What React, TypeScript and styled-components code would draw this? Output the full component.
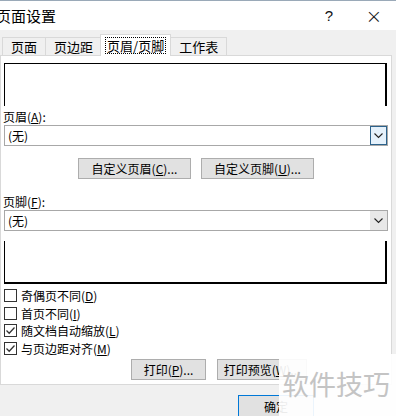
import React, { ReactElement } from "react";
import styled, { createGlobalStyle } from "styled-components";

const GlobalStyle = createGlobalStyle`
	html, body {
		margin: 0;
		padding: 0;
		background: #f0f0f0;
		overflow: hidden;
	}
	body {
		font-family: "Noto Sans CJK SC", "Liberation Sans", sans-serif;
		font-size: 12px;
		color: #000;
	}
`;

const tabs = ["页面", "页边距", "页眉/页脚", "工作表"];

const checks = [
	{ label: "奇偶页不同", key: "D", checked: false },
	{ label: "首页不同", key: "I", checked: false },
	{ label: "随文档自动缩放", key: "L", checked: true },
	{ label: "与页边距对齐", key: "M", checked: true },
];

function ChevronDown(): ReactElement {
	return (
		<svg width="9" height="6" viewBox="0 0 9 6">
			<path d="M0.5 0.5 L4.5 4.5 L8.5 0.5" fill="none" stroke="#222" strokeWidth="1.1" />
		</svg>
	);
}

function Check(): ReactElement {
	return (
		<svg width="11" height="11" viewBox="0 0 11 11">
			<path d="M1.5 5.5 L4.2 8.2 L9.5 2.5" fill="none" stroke="#333" strokeWidth="1.3" />
		</svg>
	);
}

export default function App(): ReactElement {
	return (
		<Dialog>
			<GlobalStyle />
			<TitleBar>
				<Title>页面设置</Title>
				<TitleBtn>?</TitleBtn>
				<TitleBtn $close>×</TitleBtn>
			</TitleBar>
			<Body>
				<TabStrip>
					{tabs.map((t) => (
						<Tab key={t} $active={t === "页眉/页脚"}>
							<TabText $active={t === "页眉/页脚"}>{t}</TabText>
						</Tab>
					))}
				</TabStrip>
				<Panel>
					<Preview $top />
					<Label>
						页眉(<u>A</u>):
					</Label>
					<Select>
						<SelectText>(无)</SelectText>
						<DropBtn $focus>
							<ChevronDown />
						</DropBtn>
					</Select>
					<ButtonRow>
						<Button $w={113}>自定义页眉(<u>C</u>)...</Button>
						<Button $w={113}>自定义页脚(<u>U</u>)...</Button>
					</ButtonRow>
					<Label>
						页脚(<u>F</u>):
					</Label>
					<Select>
						<SelectText>(无)</SelectText>
						<DropBtn>
							<ChevronDown />
						</DropBtn>
					</Select>
					<Preview />
					<CheckList>
						{checks.map((c) => (
							<CheckRow key={c.key}>
								<Box>{c.checked && <Check />}</Box>
								<span>
									{c.label}(<u>{c.key}</u>)
								</span>
							</CheckRow>
						))}
					</CheckList>
					<PrintRow>
						<Button $w={75}>打印(<u>P</u>)...</Button>
						<Button $w={90}>打印预览(<u>W</u>)...</Button>
					</PrintRow>
				</Panel>
				<Footer>
					<OkButton>确定</OkButton>
				</Footer>
			</Body>
			<Watermark>软件技巧</Watermark>
		</Dialog>
	);
}

const Dialog = styled.div`
	position: relative;
	width: 396px;
	height: 416px;
	overflow: hidden;
	background: #f0f0f0;
`;

const TitleBar = styled.div`
	height: 30px;
	display: flex;
	align-items: center;
	background: #fff;
	border-top: 1px solid #9aa9b8;
	box-sizing: border-box;
`;

const Title = styled.div`
	flex: 1;
	margin-left: -4px;
	font-family: "Noto Sans CJK SC", sans-serif;
	font-size: 15px;
	color: #000;
`;

const TitleBtn = styled.div<{ $close?: boolean }>`
	width: ${(p) => (p.$close ? "44px" : "46px")};
	text-align: center;
	font-family: ${(p) => (p.$close ? '"DejaVu Sans"' : '"Liberation Sans"')}, sans-serif;
	font-size: ${(p) => (p.$close ? "20px" : "15px")};
	font-weight: ${(p) => (p.$close ? 300 : 400)};
	color: #111;
`;

const Body = styled.div`
	display: flex;
	flex-direction: column;
	padding: 4px 4px 0 0;
`;

const TabStrip = styled.div`
	display: flex;
	align-items: flex-end;
	height: 22px;
	padding-left: 2px;
	position: relative;
	z-index: 1;
`;

const Tab = styled.div<{ $active?: boolean }>`
	height: ${(p) => (p.$active ? "22px" : "19px")};
	padding: 0 ${(p) => (p.$active ? "5px" : "7px")};
	margin: 0 ${(p) => (p.$active ? "-1px 0 -1px" : "-1px 0 0")};
	display: flex;
	align-items: center;
	box-sizing: border-box;
	background: ${(p) => (p.$active ? "#fff" : "#f0f0f0")};
	border: 1px solid #d9d9d9;
	border-bottom: ${(p) => (p.$active ? "none" : "1px solid #d9d9d9")};
	font-size: 13px;
`;

const TabText = styled.span<{ $active?: boolean }>`
	padding: 0 1px;
	line-height: 15px;
	outline: ${(p) => (p.$active ? "1px dotted #000" : "none")};
`;

const Panel = styled.div`
	background: #fff;
	border: 1px solid #d9d9d9;
	margin-top: -1px;
	height: 330px;
	box-sizing: border-box;
	display: flex;
	flex-direction: column;
	padding: 7px 0 0 3px;
`;

const Preview = styled.div<{ $top?: boolean }>`
	width: 383px;
	height: 43px;
	box-sizing: border-box;
	border-left: 1px solid #000;
	border-right: 2px solid #000;
	border-top: ${(p) => (p.$top ? "1px solid #000" : "none")};
	border-bottom: ${(p) => (p.$top ? "none" : "2px solid #000")};
	margin-top: ${(p) => (p.$top ? "0" : "10px")};
`;

const Label = styled.div`
	margin-top: 2px;
	height: 17px;
	line-height: 17px;
	font-size: 12px;
	margin-left: -1px;
`;

const Select = styled.div`
	width: 384px;
	height: 21px;
	box-sizing: border-box;
	border: 1px solid #a8a8a8;
	display: flex;
	align-items: center;
	background: #fff;
`;

const SelectText = styled.div`
	flex: 1;
	padding-left: 3px;
	font-size: 12px;
`;

const DropBtn = styled.div<{ $focus?: boolean }>`
	width: 17px;
	height: 19px;
	box-sizing: border-box;
	display: flex;
	align-items: center;
	justify-content: center;
	background: ${(p) => (p.$focus ? "#e5f1fb" : "#e8e8e8")};
	border: 1px solid ${(p) => (p.$focus ? "#2c628b" : "#e8e8e8")};
`;

const ButtonRow = styled.div`
	display: flex;
	gap: 10px;
	padding-left: 74px;
	margin: 12px 0 12px;
`;

const Button = styled.div<{ $w: number }>`
	width: ${(p) => p.$w}px;
	height: 21px;
	box-sizing: border-box;
	background: #e1e1e1;
	border: 1px solid #adadad;
	display: flex;
	align-items: center;
	justify-content: center;
	font-size: 12px;
	white-space: nowrap;
	overflow: hidden;
`;

const CheckList = styled.div`
	display: flex;
	flex-direction: column;
	margin-top: 3px;
`;

const CheckRow = styled.div`
	display: flex;
	align-items: center;
	gap: 4px;
	height: 17.5px;
	font-size: 12px;
`;

const Box = styled.div`
	width: 13px;
	height: 13px;
	box-sizing: border-box;
	border: 1px solid #333;
	background: #fff;
	display: flex;
	align-items: center;
	justify-content: center;
`;

const PrintRow = styled.div`
	display: flex;
	gap: 11px;
	padding-left: 127px;
	margin-top: 2px;
`;

const Footer = styled.div`
	display: flex;
	padding: 10px 0 0 238px;
`;

const OkButton = styled.div`
	width: 76px;
	height: 23px;
	box-sizing: border-box;
	background: #e1e1e1;
	border: 1px solid #0078d7;
	display: flex;
	align-items: center;
	justify-content: center;
	font-size: 12px;
`;

const Watermark = styled.div`
	position: absolute;
	left: 279px;
	top: 354px;
	width: 117px;
	height: 62px;
	background: rgba(255, 255, 255, 0.92);
	color: #c4c4c4;
	font-family: "Noto Sans CJK SC", sans-serif;
	font-size: 27px;
	line-height: 60px;
	white-space: nowrap;
	padding-left: 3px;
	box-sizing: border-box;
`;
